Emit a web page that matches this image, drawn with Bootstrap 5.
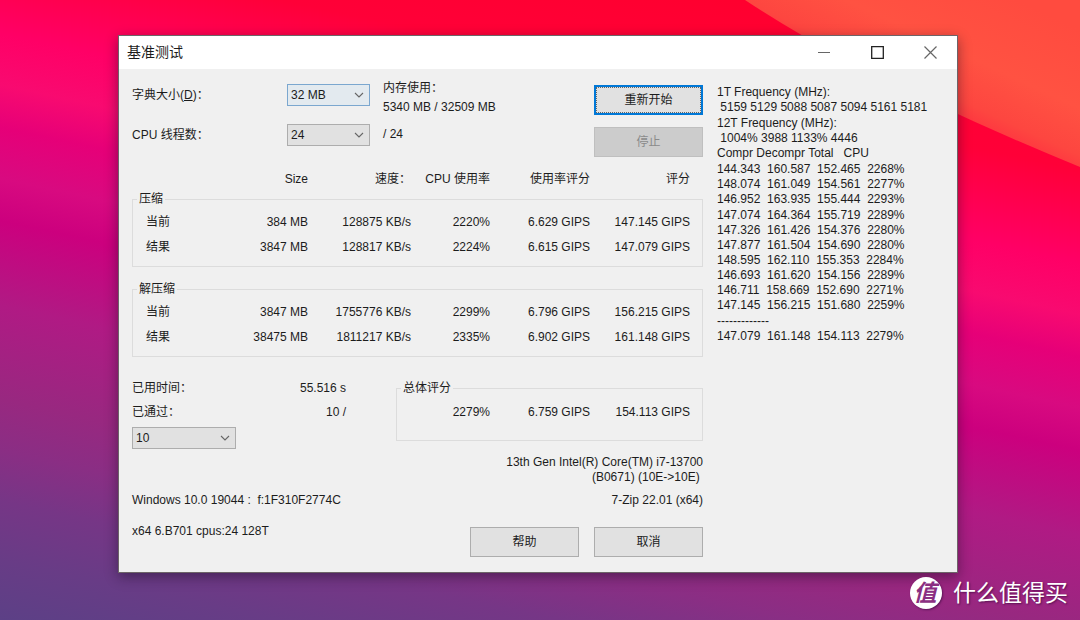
<!DOCTYPE html>
<html lang="zh-CN">
<head>
<meta charset="utf-8">
<meta name="viewport" content="width=device-width, initial-scale=1">
<title>基准测试</title>
<link href="https://cdn.jsdelivr.net/npm/bootstrap@5.3.0/dist/css/bootstrap.min.css" rel="stylesheet">
<style>
  body {
    font-family: "Liberation Sans", "Noto Sans CJK SC", sans-serif;
    font-size: 12px;
    line-height: 18px;
    color: #1c1c1c;
    background: linear-gradient(192deg, #ff0028 0%, #ff0038 20%, #ff0066 31%, #f80a70 37%, #e60078 42%, #d80a80 48%, #cc007e 53%, #b01a84 63%, #982880 74%, #8a2e84 80%, #763686 86%, #683c86 93%, #5c4086 100%);
  }
  .desktop { padding: 35px 122px 0 118px; }
  .wave { z-index: -1; }

  /* window frame */
  .win { background: #f0f0f0; border: 1px solid #6d6468; box-shadow: 0 4px 12px rgba(20, 10, 30, .45); }
  .titlebar { height: 33px; background: #fff; padding: 0 0 2px 8px; }
  .titlebar h1 { font-size: 14px; line-height: 20px; }
  .caption-btn { width: 53px; height: 31px; border: 0; background: none; color: #666; }
  .caption-btn.strong { color: #222; }
  .client { padding: 9px 13px 15px; gap: 14px; }
  .log-pane { width: 227px; padding-top: 7px; }

  /* controls */
  .win-select {
    width: 83px; height: 22px; padding: 0 20px 0 3px; border: 1px solid #adadad; border-radius: 0;
    font-size: 12px; line-height: 18px; color: #1c1c1c; background-color: #e1e1e1;
    background-image: url("data:image/svg+xml,%3Csvg xmlns='http://www.w3.org/2000/svg' viewBox='0 0 10 6'%3E%3Cpath d='M1 1l4 4 4-4' fill='none' stroke='%23666' stroke-width='1.1'/%3E%3C/svg%3E");
    background-size: 10px 6px; background-position: right 5px center;
  }
  .win-select.hot { background-color: #e3eaef; border-color: #7ba7cf; }
  .win-select.wide { width: 104px; }
  .win-btn {
    width: 109px; height: 30px; padding: 0; border: 1px solid #adadad; border-radius: 0;
    font-size: 12px; line-height: 18px; color: #1c1c1c; background: #e1e1e1;
  }
  .win-btn.default { border: 2px solid #0078d7; outline: 1px dotted #666; outline-offset: -3px; }
  .win-btn:disabled { background: #ccc; border-color: #bfbfbf; color: #8a8a8a; opacity: 1; }
  .action-stack { gap: 12px; padding-top: 7px; }

  /* form rows above the tables */
  .setup-label { width: 155px; line-height: 20px; padding-top: 7px; }
  .setup-row { height: 40px; }
  .setup-row .win-select { margin-top: 6px; }
  .setup-note { margin-left: 13px; line-height: 19px; padding-top: 1px; }
  .setup-note.single { padding-top: 7px; }

  /* group boxes and figures */
  .group { border: 1px solid #dcdcdc; padding: 1px 12px 7px 13px; }
  .group + .group { margin-top: 13px; }
  .group legend { float: none; width: auto; margin: 0 0 0 -9px; padding: 0 2px; font-size: 12px; line-height: 18px; }
  .figures { table-layout: fixed; width: 100%; }
  .figures td, .figures th { height: 25px; padding: 0; font-weight: 400; text-align: right; white-space: nowrap; }
  .figures .row-name { text-align: left; }
  .c-size { width: 90px; }
  .c-speed { width: 103px; }
  .c-cpu { width: 79px; }
  .c-rate { width: 100px; }
  .head-table { padding: 0 13px 0 14px; margin-top: 10px; }
  .head-table th { height: 22px; }
  .head-table td { height: 22px; }
  .summary { margin-top: 22px; }
  .group.total { width: 307px; padding-top: 2px; padding-bottom: 16px; margin-top: 0; }
  .stats { width: 214px; }
  .stats dt, .stats dd { font-weight: 400; line-height: 18px; margin: 0; }
  .stats-row { height: 24px; }
  .cpu-name, .log { line-height: 15px; }
  .cpu-name { margin: 6px 0; }
  .bottom-row { margin-top: 13px; }
  .bottom-actions { padding-top: 5px; gap: 15px; }
  .log { font-family: inherit; font-size: 12px; margin: 0 0 1px; overflow: visible; }

  /* site mark */
  .site-mark { height: 40px; padding-right: 12px; color: #fff; gap: 11px; }
  .site-name { font-size: 23px; line-height: 32px; text-shadow: 1px 1px 2px rgba(40, 0, 50, .6); }
  .site-logo { width: 32px; height: 32px; background: #fff; color: #8b2f82; box-shadow: 1px 1px 2px rgba(40, 0, 50, .5); }
  .site-logo text { font-size: 23px; font-weight: 700; font-style: italic; }
</style>
</head>
<body class="min-vh-100">
<svg class="wave position-absolute top-0 start-0 w-100 vh-100" viewBox="0 0 1080 620" preserveAspectRatio="none" aria-hidden="true">
  <defs>
    <linearGradient id="coral" gradientUnits="userSpaceOnUse" x1="1060" y1="20" x2="1000" y2="150">
      <stop offset="0" stop-color="#ff4b3f"/>
      <stop offset=".5" stop-color="#ff5242"/>
      <stop offset=".8" stop-color="#fd4640"/>
      <stop offset="1" stop-color="#ff2c40"/>
    </linearGradient>
  </defs>
  <path d="M745 0Q790 30 850 62Q960 118 1080 167V0Z" fill="url(#coral)"/>
</svg>

<main class="desktop">
  <section class="win" aria-label="基准测试">
    <header class="titlebar d-flex align-items-center justify-content-between">
      <h1 class="m-0 fw-normal">基准测试</h1>
      <div class="d-flex">
        <button class="caption-btn p-0" aria-label="最小化"><svg width="13" height="13" viewBox="0 0 13 13"><path d="M0 6.500h12" stroke="currentColor" fill="none"/></svg></button>
        <button class="caption-btn strong p-0" aria-label="最大化"><svg width="13" height="13" viewBox="0 0 13 13"><path d="M.7.7h11.600v11.600H.7z" stroke="currentColor" stroke-width="1.3" fill="none"/></svg></button>
        <button class="caption-btn p-0" aria-label="关闭"><svg width="13" height="13" viewBox="0 0 13 13"><path d="M.5.5l12 12M12.500.5l-12 12" stroke="currentColor" stroke-width="1.2" fill="none"/></svg></button>
      </div>
    </header>

    <div class="client d-flex">
      <form class="flex-grow-1">
        <div class="d-flex justify-content-between">
          <div>
            <div class="setup-row d-flex">
              <label class="setup-label" for="dict">字典大小(<u>D</u>)：</label>
              <select id="dict" class="form-select win-select hot"><option>32 MB</option></select>
              <div class="setup-note">内存使用：<br>5340 MB / 32509 MB</div>
            </div>
            <div class="setup-row d-flex">
              <label class="setup-label" for="threads">CPU 线程数：</label>
              <select id="threads" class="form-select win-select"><option>24</option></select>
              <div class="setup-note single">/ 24</div>
            </div>
          </div>
          <div class="action-stack d-flex flex-column">
            <button type="button" class="btn win-btn default">重新开始</button>
            <button type="button" class="btn win-btn" disabled>停止</button>
          </div>
        </div>

        <div class="head-table">
          <table class="figures">
            <colgroup><col><col class="c-size"><col class="c-speed"><col class="c-cpu"><col class="c-rate"><col class="c-rate"></colgroup>
            <tr><td></td><th>Size</th><th>速度：</th><th>CPU 使用率</th><th>使用率评分</th><th>评分</th></tr>
          </table>
        </div>
        <fieldset class="group">
          <legend>压缩</legend>
          <table class="figures">
            <colgroup><col><col class="c-size"><col class="c-speed"><col class="c-cpu"><col class="c-rate"><col class="c-rate"></colgroup>
            <tr><th class="row-name">当前</th><td>384 MB</td><td>128875 KB/s</td><td>2220%</td><td>6.629 GIPS</td><td>147.145 GIPS</td></tr>
            <tr><th class="row-name">结果</th><td>3847 MB</td><td>128817 KB/s</td><td>2224%</td><td>6.615 GIPS</td><td>147.079 GIPS</td></tr>
          </table>
        </fieldset>
        <fieldset class="group">
          <legend>解压缩</legend>
          <table class="figures">
            <colgroup><col><col class="c-size"><col class="c-speed"><col class="c-cpu"><col class="c-rate"><col class="c-rate"></colgroup>
            <tr><th class="row-name">当前</th><td>3847 MB</td><td>1755776 KB/s</td><td>2299%</td><td>6.796 GIPS</td><td>156.215 GIPS</td></tr>
            <tr><th class="row-name">结果</th><td>38475 MB</td><td>1811217 KB/s</td><td>2335%</td><td>6.902 GIPS</td><td>161.148 GIPS</td></tr>
          </table>
        </fieldset>

        <div class="summary d-flex justify-content-between align-items-start">
          <div class="stats">
            <dl class="m-0">
              <div class="stats-row d-flex justify-content-between"><dt>已用时间：</dt><dd>55.516 s</dd></div>
              <div class="stats-row d-flex justify-content-between"><dt><label for="passes">已通过：</label></dt><dd>10 /</dd></div>
            </dl>
            <select id="passes" class="form-select win-select wide"><option>10</option></select>
          </div>
          <fieldset class="group total">
            <legend>总体评分</legend>
            <table class="figures">
              <colgroup><col><col class="c-rate"><col class="c-rate"></colgroup>
              <tr><td>2279%</td><td>6.759 GIPS</td><td>154.113 GIPS</td></tr>
            </table>
          </fieldset>
        </div>

        <div class="cpu-name text-end">13th Gen Intel(R) Core(TM) i7-13700<br>(B0671) (10E-&gt;10E)&nbsp;</div>
        <div class="d-flex justify-content-between"><span>Windows 10.0 19044 :&nbsp; f:1F310F2774C</span><span>7-Zip 22.01 (x64)</span></div>
        <div class="bottom-row d-flex justify-content-between">
          <span>x64 6.B701 cpus:24 128T</span>
          <div class="bottom-actions d-flex">
            <button type="button" class="btn win-btn">帮助</button>
            <button type="button" class="btn win-btn">取消</button>
          </div>
        </div>
      </form>

      <aside class="log-pane flex-shrink-0">
<pre class="log">1T Frequency (MHz):
 5159 5129 5088 5087 5094 5161 5181</pre>
<pre class="log">12T Frequency (MHz):
 1004% 3988 1133% 4446
Compr Decompr Total   CPU</pre>
<pre class="log">144.343  160.587  152.465  2268%
148.074  161.049  154.561  2277%
146.952  163.935  155.444  2293%</pre>
<pre class="log">147.074  164.364  155.719  2289%
147.326  161.426  154.376  2280%
147.877  161.504  154.690  2280%
148.595  162.110  155.353  2284%
146.693  161.620  154.156  2289%
146.711  158.669  152.690  2271%
147.145  156.215  151.680  2259%</pre>
<pre class="log">-------------
147.079  161.148  154.113  2279%</pre>
      </aside>
    </div>
  </section>
</main>
<footer class="site-mark d-flex align-items-center justify-content-end">
  <svg class="site-logo rounded-circle" viewBox="0 0 32 32" aria-hidden="true"><text x="15" y="24" text-anchor="middle" fill="currentColor">值</text></svg>
  <span class="site-name">什么值得买</span>
</footer>
<script src="https://cdn.jsdelivr.net/npm/bootstrap@5.3.0/dist/js/bootstrap.bundle.min.js"></script>
</body>
</html>
